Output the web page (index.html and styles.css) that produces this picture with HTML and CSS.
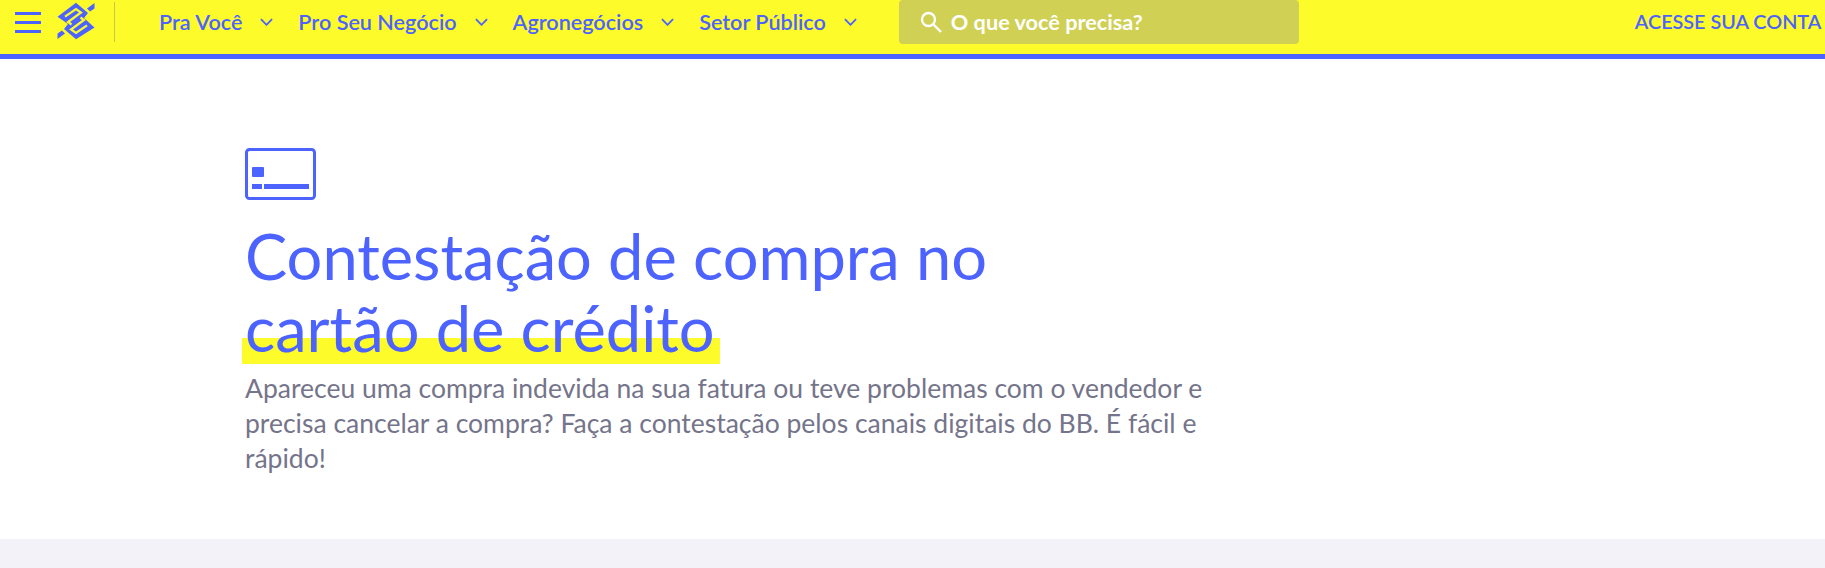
FILE: index.html
```html
<!DOCTYPE html>
<html lang="pt-BR">
<head>
    <meta charset="UTF-8">
    <meta name="viewport" content="width=device-width, initial-scale=1.0">
    <title>Contestação de compra no cartão de crédito</title>
    <link rel="stylesheet" href="styles.css">
</head>
<body>
    <header class="topbar">
        <button class="menu-btn" aria-label="Menu">
            <span></span><span></span><span></span>
        </button>
        <svg class="logo" viewBox="0 0 38 38">
            <path fill="#4d63ff" d="M19 .7 L31 11 L27 16 L37.5 25.5 L19 37.3 L7 27 L11 22 L.5 14.7 Z"/>
            <path fill="#4d63ff" d="M30 6.5 L37.5 1 L37.5 6.5 L33 9.5 Z M8 31.5 L.5 37 L.5 31.5 L5 28.5 Z"/>
            <g fill="none" stroke="#fdfc2a" stroke-width="2.2">
                <path d="M8 14.7 L19 7 L24 10.5 L11 20 L14.5 22.5"/>
                <path d="M30 23.3 L19 31 L14 27.5 L27 18 L23.5 15.5"/>
            </g>
        </svg>
        <nav class="nav">
            <a class="nav-item" href="#">Pra Você
                <svg class="chev" viewBox="0 0 14 8"><path d="M1 1 L7 7 L13 1"/></svg>
            </a>
            <a class="nav-item" href="#">Pro Seu Negócio
                <svg class="chev" viewBox="0 0 14 8"><path d="M1 1 L7 7 L13 1"/></svg>
            </a>
            <a class="nav-item" href="#">Agronegócios
                <svg class="chev" viewBox="0 0 14 8"><path d="M1 1 L7 7 L13 1"/></svg>
            </a>
            <a class="nav-item" href="#">Setor Público
                <svg class="chev" viewBox="0 0 14 8"><path d="M1 1 L7 7 L13 1"/></svg>
            </a>
        </nav>
        <div class="search">
            <svg class="search-icon" viewBox="0 0 22 22" fill="none" stroke="#fff" stroke-width="2.4">
                <circle cx="8.5" cy="8.5" r="6.5"/>
                <path d="M13.5 13.5 L21 21"/>
            </svg>
            <span>O que você precisa?</span>
        </div>
        <a class="account" href="#">ACESSE SUA CONTA</a>
    </header>

    <section class="hero">
        <svg class="card-icon" viewBox="0 0 71 52">
            <rect x="1.5" y="1.5" width="68" height="49" rx="3" fill="none" stroke="#4d63ff" stroke-width="3"/>
            <rect x="7" y="19" width="12" height="10" rx="1" fill="#4d63ff"/>
            <rect x="7" y="36" width="10" height="5" fill="#4d63ff"/>
            <rect x="19" y="36" width="45" height="5" fill="#4d63ff"/>
        </svg>
        <h1 class="title">Contestação de compra no<br><span class="mark">cartão de crédito</span></h1>
        <p class="lead">Apareceu uma compra indevida na sua fatura ou teve problemas com o vendedor e precisa cancelar a compra? Faça a contestação pelos canais digitais do BB. É fácil e rápido!</p>
    </section>

    <div class="below"></div>
</body>
</html>
```

FILE: styles.css
```css
* {
    box-sizing: border-box;
}
html, body {
    height: 100%;
}
body {
    margin: 0;
    display: flex;
    flex-direction: column;
    overflow: hidden;
    background: #fff;
    font-family: Lato, "Noto Sans", sans-serif;
}
.topbar {
    flex: none;
    height: 59px;
    display: flex;
    align-items: flex-start;
    overflow: hidden;
    background: #fdfc2a;
    border-bottom: 5px solid #4d63ff;
}
.menu-btn {
    flex: none;
    display: flex;
    flex-direction: column;
    gap: 6px;
    width: 26px;
    margin: 12px 16px 0 15px;
    padding: 0;
    border: 0;
    background: none;
}
.menu-btn span {
    display: block;
    height: 3px;
    background: #4d63ff;
}
.logo {
    flex: none;
    width: 38px;
    height: 38px;
    margin-top: 2px;
}
.nav {
    flex: none;
    display: flex;
    height: 40px;
    margin: 2px 0 0 19px;
    padding-left: 44px;
    border-left: 1px solid #c9c840;
}
.nav-item {
    display: flex;
    align-items: center;
    gap: 18px;
    height: 40px;
    margin-right: 25px;
    color: #4d63ff;
    font-size: 21.6px;
    font-weight: 600;
    text-decoration: none;
}
.chev {
    width: 13px;
    height: 8px;
    fill: none;
    stroke: #4d63ff;
    stroke-width: 2;
}
.search {
    flex: none;
    display: flex;
    align-items: center;
    gap: 9px;
    width: 400px;
    height: 44px;
    margin-left: 17px;
    padding-left: 21px;
    border-radius: 4px;
    background: #d0d055;
    color: #fff;
    font-size: 21.7px;
    font-weight: 700;
}
.search-icon {
    flex: none;
    width: 22px;
    height: 22px;
}
.account {
    flex: none;
    margin-left: 336px;
    line-height: 42px;
    color: #4d63ff;
    font-size: 19.8px;
    font-weight: 600;
    text-decoration: none;
    white-space: nowrap;
}
.hero {
    flex: none;
    height: 480px;
    padding: 89px 0 0 245px;
}
.card-icon {
    display: block;
    width: 71px;
    height: 52px;
}
.title {
    margin: 20px 0 0;
    color: #4d63ff;
    font-size: 63.2px;
    font-weight: 400;
    line-height: 72px;
}
.mark {
    display: inline-block;
    margin-left: -3px;
    padding: 0 5px 0 3px;
    background: linear-gradient(#fdfc2a, #fdfc2a) no-repeat 0 46px / 100% 26px;
}
.lead {
    width: 970px;
    margin: 7px 0 0;
    color: #74748a;
    font-size: 26.5px;
    line-height: 35px;
}
.below {
    flex: 1;
    background: #f2f2f8;
}
```
